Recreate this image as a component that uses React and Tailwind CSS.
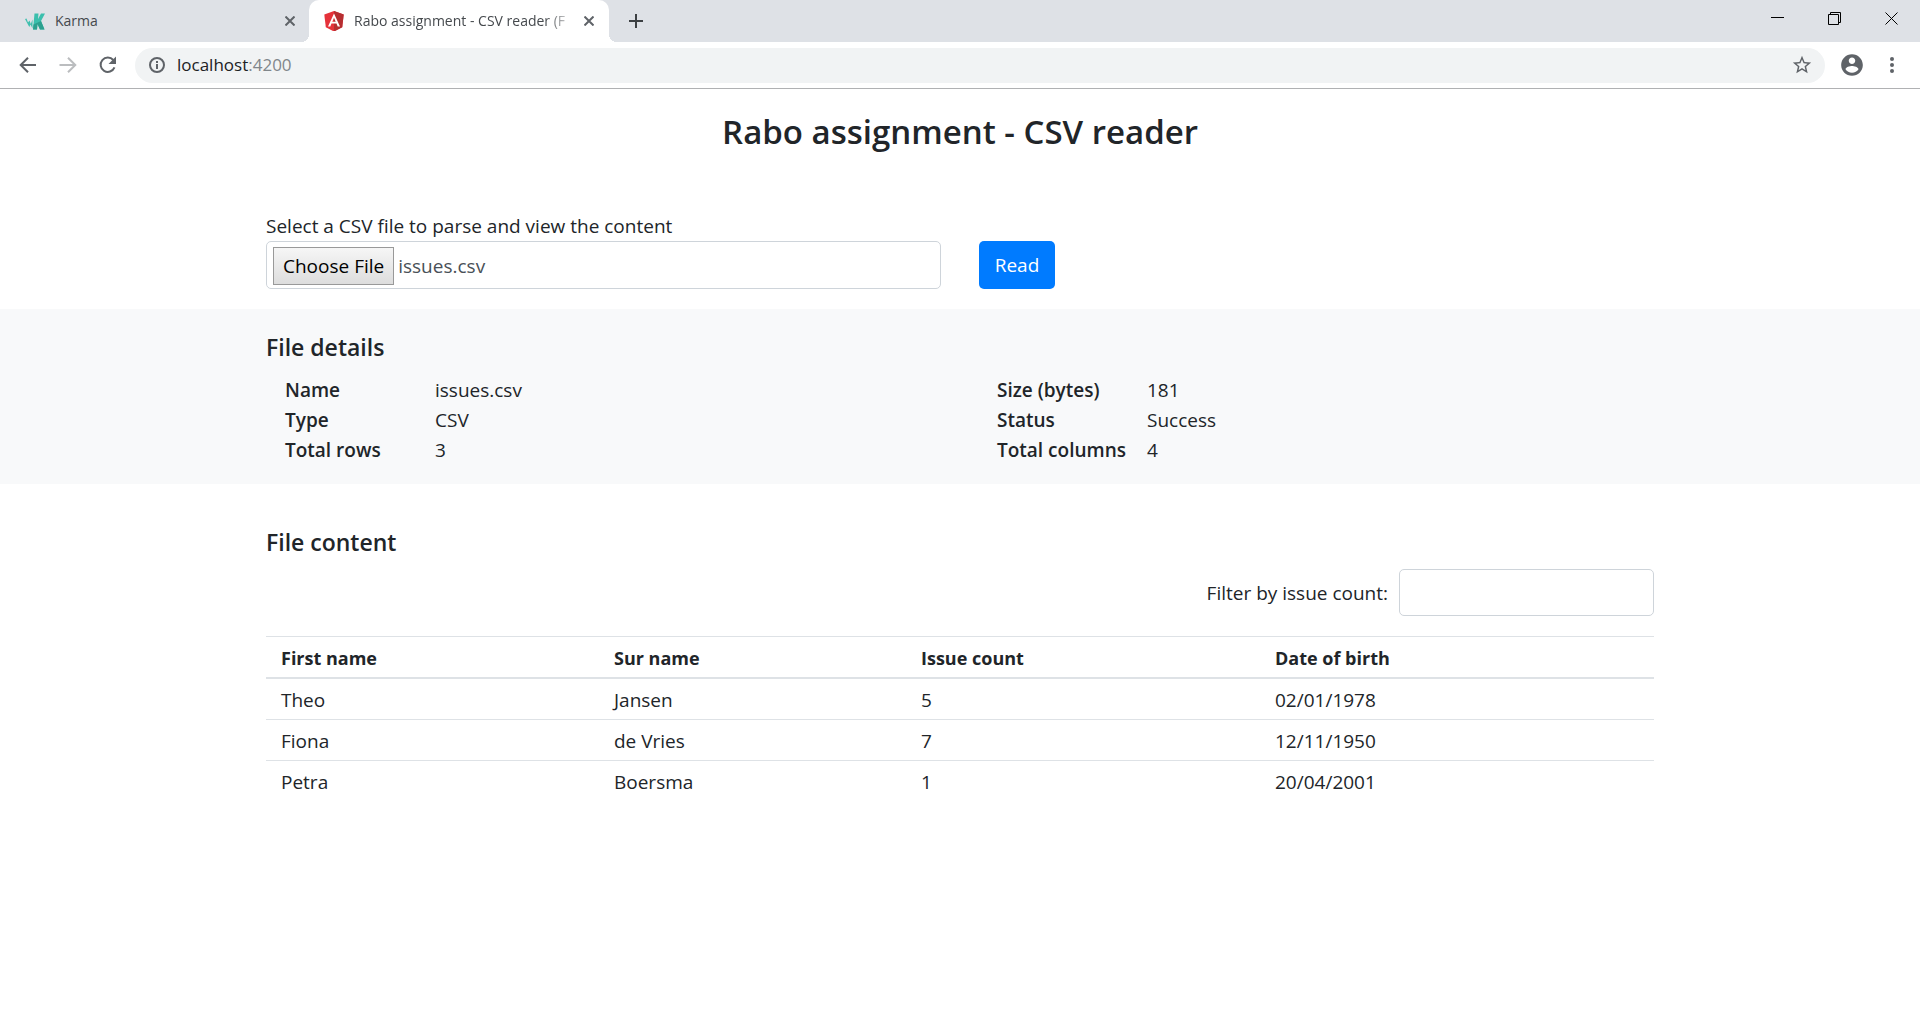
import { useEffect, useRef, useState } from "react";

const DETAILS = [
  [["Name", "issues.csv"], ["Type", "CSV"], ["Total rows", "3"]],
  [["Size (bytes)", "181"], ["Status", "Success"], ["Total columns", "4"]],
];

const COLUMNS = [
  { label: "First name", width: "w-[333px]" },
  { label: "Sur name", width: "w-[307px]" },
  { label: "Issue count", width: "w-[354px]" },
  { label: "Date of birth", width: "w-auto" },
];

const ROWS = [
  ["Theo", "Jansen", "5", "02/01/1978"],
  ["Fiona", "de Vries", "7", "12/11/1950"],
  ["Petra", "Boersma", "1", "20/04/2001"],
];

function KarmaLogo() {
  return (
    <svg className="size-5 shrink-0" viewBox="0 0 20 20" aria-hidden="true">
      <path d="M0 8l1.500-.5 1.500 4L4.500 9.500l1.300 3.500L7.500 8.500V17.500L5.500 13.500 4.300 16z" fill="#3fbfae" />
      <path d="M9.500 2.500H13.500l-.5 5.500L16 2.500H20l-4 7.500 3.500 8.500H15L12.500 13l-.5 5.500H8z" fill="#3bbfad" />
      <path d="M16 10l3.500 8.500H15L12.500 13l-.5 5.500H8l.5-5z" fill="#2ca08f" />
    </svg>
  );
}

function AngularLogo() {
  return (
    <svg className="size-5 shrink-0" viewBox="0 0 20 20" aria-hidden="true">
      <path d="M10 0L.300 3.500l1.500 12.800L10 20.500l8.200-4.200 1.500-12.800z" fill="#e5323a" />
      <path d="M10 0v20.500l8.200-4.200 1.500-12.800z" fill="#b52e31" />
      <path d="M10 2.400L4 15.500h2.300l1.200-3h5l1.200 3H16zm0 4.300l1.700 4H8.300z" fill="#fff" />
    </svg>
  );
}

function CloseGlyph() {
  return (
    <svg className="size-[10px]" viewBox="0 0 10 10" stroke="#5f6368" strokeWidth="2" aria-hidden="true">
      <path d="M.5.5l9 9M9.500.5l-9 9" />
    </svg>
  );
}

function TabStrip() {
  return (
    <div className="flex h-[42px] bg-[#dee1e6] text-sm text-[#45494d]">
      <div className="flex w-[309px] items-center pr-3.5 pl-[25px]">
        <KarmaLogo />
        <span className="ml-2.5 flex-1">Karma</span>
        <button aria-label="Close Karma tab"><CloseGlyph /></button>
      </div>
      <div className="relative flex w-[300px] items-center rounded-t-[10px] bg-white pr-[15px] pl-[15px]">
        <span className="absolute bottom-0 -left-2 size-2 bg-[radial-gradient(circle_at_0_0,transparent_8px,white_8px)]" />
        <span className="absolute -right-2 bottom-0 size-2 bg-[radial-gradient(circle_at_100%_0,transparent_8px,white_8px)]" />
        <AngularLogo />
        <span className="mr-2 ml-2.5 flex-1 whitespace-nowrap [mask-image:linear-gradient(to_right,black_86%,transparent)]">
          Rabo assignment - CSV reader (F
        </span>
        <button aria-label="Close Rabo tab"><CloseGlyph /></button>
      </div>
      <button aria-label="New tab" className="ml-5">
        <svg className="size-[14px]" viewBox="0 0 14 14" stroke="#3c4043" strokeWidth="2" aria-hidden="true">
          <path d="M7 0v14M0 7h14" />
        </svg>
      </button>
      <div className="ml-auto flex items-start gap-[43px] pt-3 pr-[21px]">
        <button aria-label="Minimize">
          <svg className="size-[14px]" viewBox="0 0 14 14" stroke="#000" aria-hidden="true"><path d="M0 5.500h13" /></svg>
        </button>
        <button aria-label="Restore">
          <svg className="size-[14px]" viewBox="0 0 14 14" fill="none" stroke="#000" aria-hidden="true">
            <path d="M.5 2.500h10v10H.5zM2.500 2.500v-2h10v10h-2" />
          </svg>
        </button>
        <button aria-label="Close window">
          <svg className="size-[14px]" viewBox="0 0 14 14" stroke="#000" aria-hidden="true"><path d="M.5.5l12 12M12.500.5l-12 12" /></svg>
        </button>
      </div>
    </div>
  );
}

function Toolbar() {
  return (
    <div className="flex h-[47px] items-center border-b border-[#b0b1b3] bg-white pr-[21px] pl-[18px]">
      <button aria-label="Back">
        <svg className="size-5" viewBox="0 0 20 20" fill="none" stroke="#5f6368" strokeWidth="2" aria-hidden="true">
          <path d="M18 10H3M10 2.700L2.700 10l7.300 7.300" />
        </svg>
      </button>
      <button aria-label="Forward" className="ml-5">
        <svg className="size-5" viewBox="0 0 20 20" fill="none" stroke="#bbbdbf" strokeWidth="2" aria-hidden="true">
          <path d="M1.500 10H17M10 2.700l7.300 7.300-7.300 7.300" />
        </svg>
      </button>
      <button aria-label="Reload" className="ml-5">
        <svg className="size-5" viewBox="0 0 20 20" aria-hidden="true">
          <path d="M16.500 12.400A7.200 7.200 0 1 1 15.300 5" fill="none" stroke="#5f6368" strokeWidth="2" />
          <path d="M18 1.500v7.500H10.500z" fill="#5f6368" />
        </svg>
      </button>
      <div className="ml-[17px] flex h-[35px] flex-1 items-center rounded-full bg-[#f1f3f4] pr-3 pl-3.5">
        <svg className="size-4 shrink-0" viewBox="0 0 16 16" aria-hidden="true">
          <circle cx="8" cy="8" r="7" fill="none" stroke="#5f6368" strokeWidth="2" />
          <path d="M7 7h2v5H7zM7 4h2v2H7z" fill="#5f6368" />
        </svg>
        <a href="http://localhost:4200" className="ml-3 flex-1 text-[17px] text-[#202124]">
          localhost<span className="text-[#80868b]">:4200</span>
        </a>
        <button aria-label="Bookmark this page">
          <svg className="size-[22px]" viewBox="0 0 24 24" fill="#5f6368" aria-hidden="true">
            <path d="M22 9.240l-7.190-.62L12 2 9.190 8.630 2 9.240l5.460 4.730L5.820 21 12 17.270 18.180 21l-1.630-7.030L22 9.240zM12 15.400l-3.760 2.270 1-4.280-3.320-2.880 4.380-.38L12 6.100l1.710 4.040 4.380.38-3.320 2.880 1 4.280L12 15.400z" />
          </svg>
        </button>
      </div>
      <button aria-label="Profile" className="ml-3.5">
        <svg className="size-[26px]" viewBox="0 0 24 24" fill="#5f6368" aria-hidden="true">
          <path d="M12 2C6.480 2 2 6.480 2 12s4.480 10 10 10 10-4.480 10-10S17.520 2 12 2zm0 3c1.660 0 3 1.340 3 3s-1.340 3-3 3-3-1.340-3-3 1.340-3 3-3zm0 14.200c-2.500 0-4.710-1.280-6-3.220.03-1.990 4-3.080 6-3.080 1.990 0 5.970 1.090 6 3.080-1.290 1.940-3.500 3.220-6 3.220z" />
        </svg>
      </button>
      <button aria-label="Menu" className="ml-5">
        <svg className="h-[18px] w-[14px]" viewBox="0 0 14 18" fill="#5f6368" aria-hidden="true">
          <circle cx="7" cy="3" r="2" /><circle cx="7" cy="9" r="2" /><circle cx="7" cy="15" r="2" />
        </svg>
      </button>
    </div>
  );
}

function Container({ children }) {
  return <div className="mx-auto max-w-[1424px] px-[18px]">{children}</div>;
}

export default function App() {
  const fileRef = useRef(null);
  const [filter, setFilter] = useState("");

  useEffect(() => {
    const transfer = new DataTransfer();
    transfer.items.add(new File([""], "issues.csv", { type: "text/csv" }));
    fileRef.current.files = transfer.files;
  }, []);

  const rows = ROWS.filter((row) => filter === "" || row[2] === filter);

  return (
    <div className="min-h-screen bg-white font-['Open_Sans','Noto_Sans',sans-serif] text-[19px]/[30px] text-[#212529]">
      <header>
        <TabStrip />
        <Toolbar />
      </header>
      <main>
        <Container>
          <h1 className="pt-[22px] text-center text-[33px]/[42px] font-semibold">Rabo assignment - CSV reader</h1>
          <form className="pt-[58px] pb-5" onSubmit={(e) => e.preventDefault()}>
            <label htmlFor="csv" className="block">Select a CSV file to parse and view the content</label>
            <div className="grid grid-cols-2 gap-[38px]">
              <input
                ref={fileRef}
                id="csv"
                type="file"
                accept=".csv"
                className="h-12 w-full rounded-[5px] border border-[#ced4da] px-1.5 py-[5px] text-[#495057] file:h-[38px] file:border file:border-solid file:border-[#999] file:bg-linear-to-b file:from-[#f6f6f6] file:to-[#dddddd] file:px-[9px] file:text-black"
              />
              <button type="submit" className="h-12 w-[76px] rounded-[5px] bg-[#007bff] text-white">Read</button>
            </div>
          </form>
        </Container>

        <section className="bg-[#f8f9fa] pt-[23px] pb-[19px]">
          <Container>
            <h2 className="text-[23px]/[30px] font-semibold">File details</h2>
            <div className="-mx-[18px] mt-[13px] grid grid-cols-2">
              {DETAILS.map((group) => (
                <dl key={group[0][0]} className="grid grid-cols-[150px_1fr] pl-[37px]">
                  {group.map(([term, value]) => (
                    <div key={term} className="contents">
                      <dt className="font-semibold">{term}</dt>
                      <dd>{value}</dd>
                    </div>
                  ))}
                </dl>
              ))}
            </div>
          </Container>
        </section>

        <section className="pt-[43px]">
          <Container>
            <h2 className="text-[23px]/[30px] font-semibold">File content</h2>
            <div className="mt-3 mb-5 flex items-center justify-end gap-[11px]">
              <label htmlFor="filter">Filter by issue count:</label>
              <input
                id="filter"
                type="text"
                value={filter}
                onChange={(e) => setFilter(e.target.value)}
                className="h-[47px] w-[255px] rounded-[5px] border border-[#ced4da] px-[15px]"
              />
            </div>
            <table className="w-full table-fixed border-separate border-spacing-0 text-left">
              <thead>
                <tr>
                  {COLUMNS.map(({ label, width }) => (
                    <th key={label} className={`${width} border-t border-b-2 border-[#dee2e6] px-[15px] pt-1.5 pb-1 text-lg/[30px] font-bold`}>
                      {label}
                    </th>
                  ))}
                </tr>
              </thead>
              <tbody>
                {rows.map((row) => (
                  <tr key={row[0]} className="group">
                    {row.map((cell) => (
                      <td key={cell} className="border-b border-[#dee2e6] px-[15px] pt-1.5 pb-1 group-last:border-b-0">{cell}</td>
                    ))}
                  </tr>
                ))}
              </tbody>
            </table>
          </Container>
        </section>
      </main>
    </div>
  );
}
